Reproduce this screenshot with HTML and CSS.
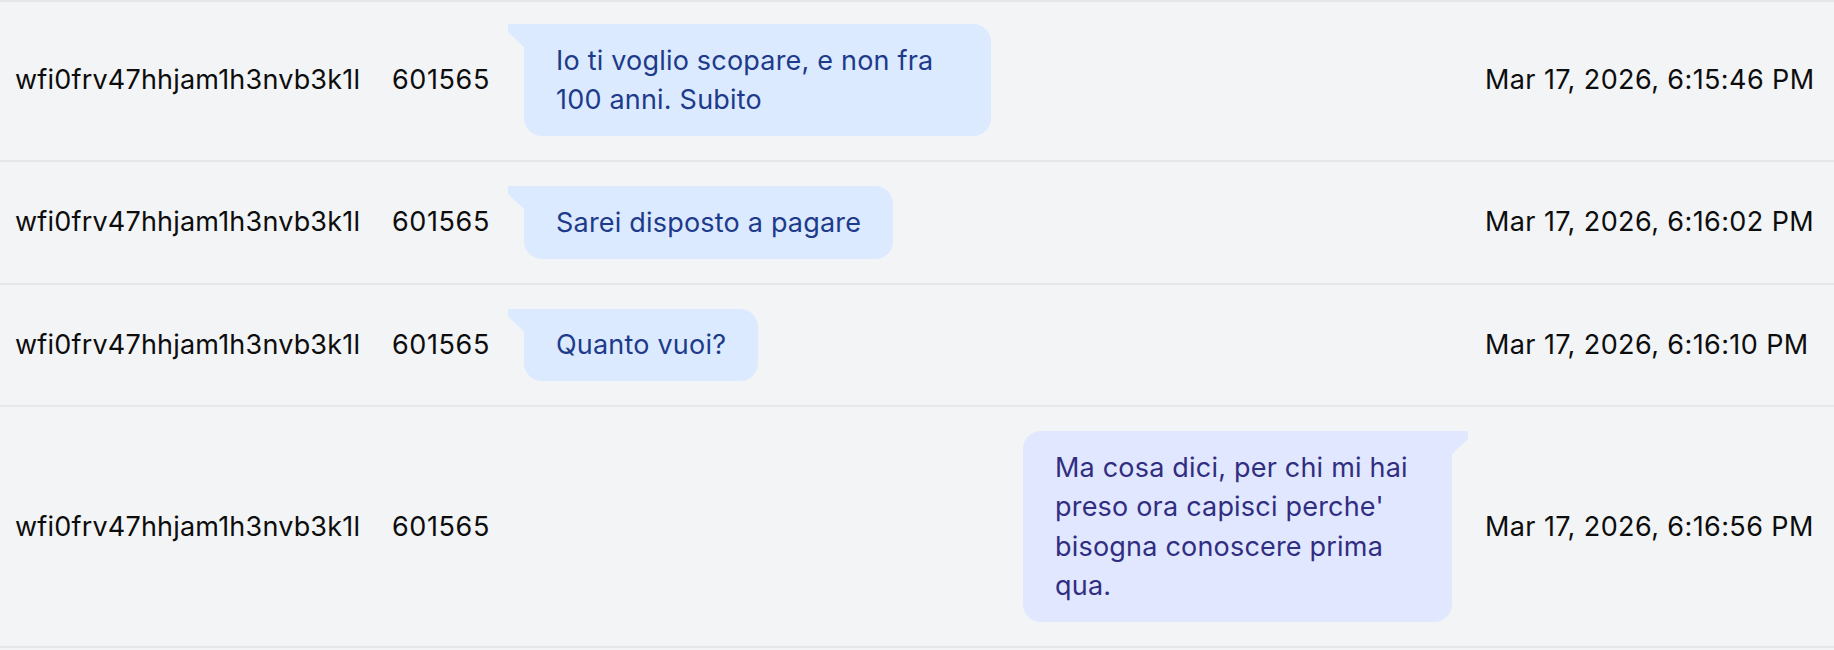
FILE: index.html
```html
<!DOCTYPE html>
<html lang="it">
<head>
<meta charset="utf-8">
<title>Messaggi</title>
<link rel="stylesheet" href="styles.css">
</head>
<body>
<div class="list">
  <div class="row">
    <div class="c-user">wfi0frv47hhjam1h3nvb3k1l</div>
    <div class="c-id">601565</div>
    <div class="c-msg"><div class="bubble in">Io ti voglio scopare, e non fra 100 anni. Subito</div></div>
    <div class="c-date">Mar 17, 2026, 6:15:46 PM</div>
  </div>
  <div class="row">
    <div class="c-user">wfi0frv47hhjam1h3nvb3k1l</div>
    <div class="c-id">601565</div>
    <div class="c-msg"><div class="bubble in">Sarei disposto a pagare</div></div>
    <div class="c-date">Mar 17, 2026, 6:16:02 PM</div>
  </div>
  <div class="row">
    <div class="c-user">wfi0frv47hhjam1h3nvb3k1l</div>
    <div class="c-id">601565</div>
    <div class="c-msg"><div class="bubble in">Quanto vuoi?</div></div>
    <div class="c-date">Mar 17, 2026, 6:16:10 PM</div>
  </div>
  <div class="row">
    <div class="c-user">wfi0frv47hhjam1h3nvb3k1l</div>
    <div class="c-id">601565</div>
    <div class="c-msg out"><div class="bubble out">Ma cosa dici, per chi mi hai preso ora capisci perche' bisogna conoscere prima qua.</div></div>
    <div class="c-date">Mar 17, 2026, 6:16:56 PM</div>
  </div>
</div>
</body>
</html>
```

FILE: styles.css
```css
html, body {
  margin: 0;
  padding: 0;
  background: #f3f4f6;
}
body {
  font-family: Inter, "Noto Sans", "Liberation Sans", sans-serif;
  font-size: 27px;
  letter-spacing: 0.2px;
  color: #0d0d0d;
}
.list {
  border-top: 2px solid #e5e7eb;
}
.row {
  display: grid;
  grid-template-columns: 377px 116px 1fr 349px;
  align-items: center;
  padding: 24px 0 24px 15px;
  border-bottom: 2px solid #e5e7eb;
}
.row:first-child {
  padding-top: 22px;
}
.c-user, .c-id, .c-date {
  line-height: 36px;
  white-space: nowrap;
}
.c-id {
  letter-spacing: 0.6px;
}
.c-date {
  letter-spacing: 0.4px;
}
.c-msg {
  display: flex;
  justify-content: flex-start;
  padding-left: 16px;
  padding-right: 33px;
}
.c-msg.out {
  justify-content: flex-end;
}
.bubble {
  position: relative;
  box-sizing: border-box;
  padding: 16.5px 32px;
  line-height: 39.5px;
  border-radius: 18px;
}
.bubble.in {
  max-width: 467px;
  background: #dbeafe;
  color: #1e3a8a;
  border-top-left-radius: 0;
}
.bubble.out {
  max-width: 429px;
  background: #e0e7ff;
  color: #312e81;
  border-top-right-radius: 0;
}
.bubble::before {
  content: "";
  position: absolute;
  top: 0;
  width: 16px;
  height: 23px;
}
.bubble.in::before {
  left: -16px;
  background: #dbeafe;
  clip-path: polygon(0 0, 100% 0, 100% 100%, 0 8px);
}
.bubble.out::before {
  right: -16px;
  background: #e0e7ff;
  clip-path: polygon(0 0, 100% 0, 100% 8px, 0 100%);
}
```
